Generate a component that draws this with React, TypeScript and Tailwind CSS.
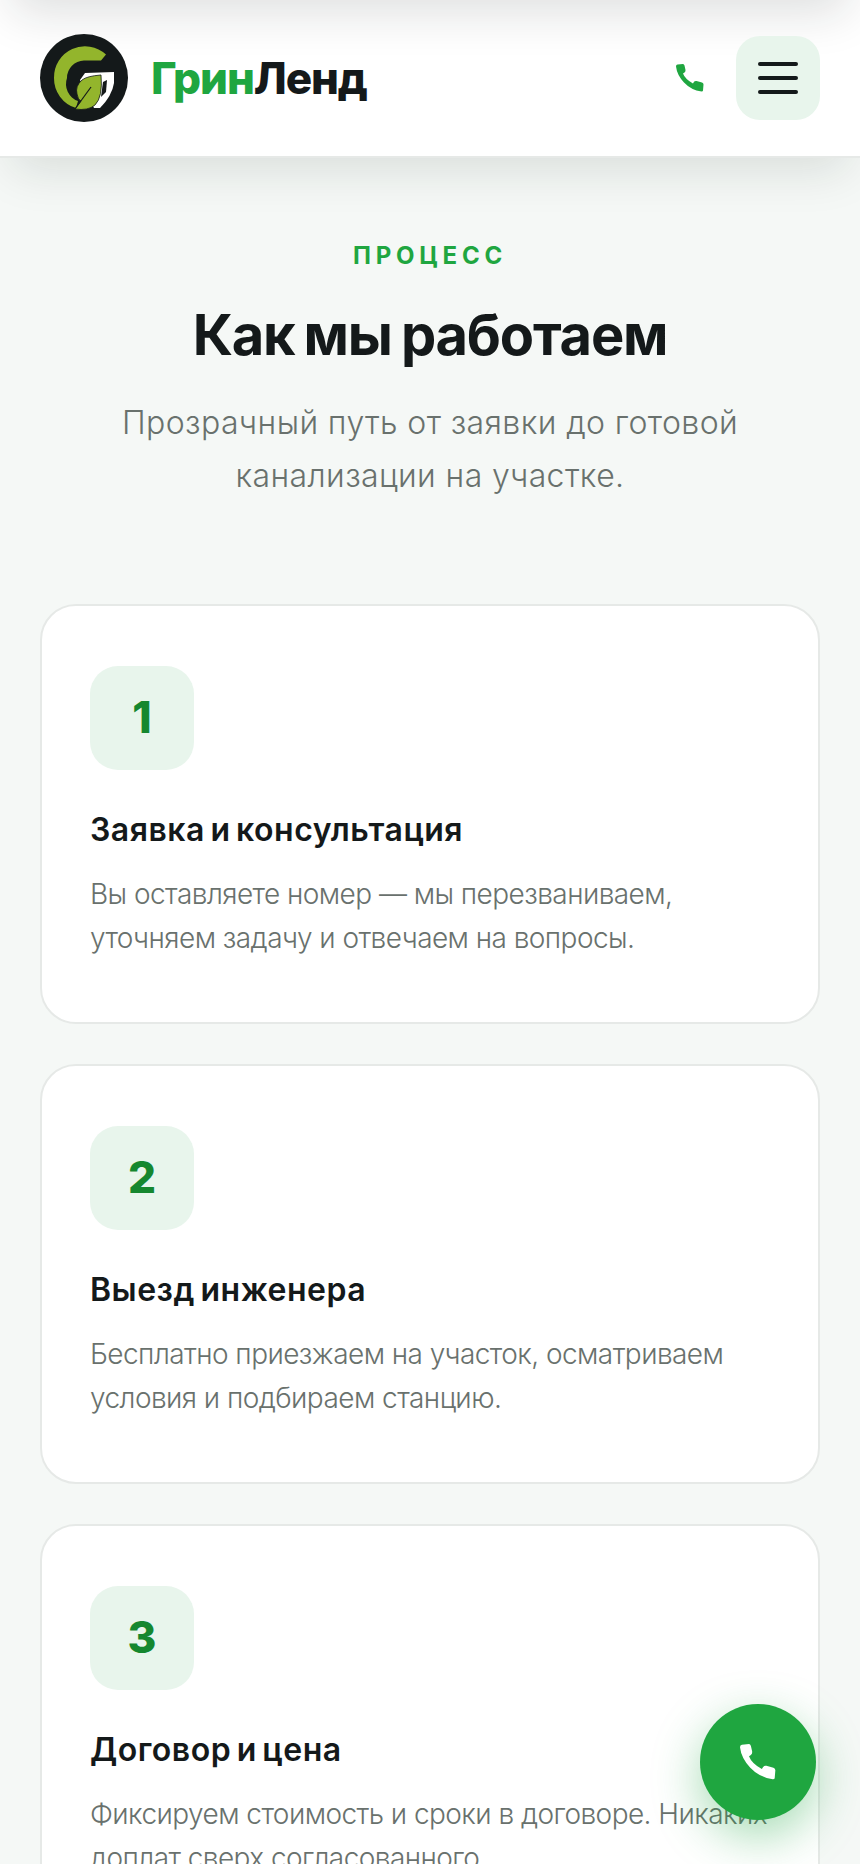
import React from "react";

const steps = [
  {
    n: "1",
    title: "Заявка и консультация",
    text: "Вы оставляете номер — мы перезваниваем, уточняем задачу и отвечаем на вопросы.",
  },
  {
    n: "2",
    title: "Выезд инженера",
    text: "Бесплатно приезжаем на участок, осматриваем условия и подбираем станцию.",
  },
  {
    n: "3",
    title: "Договор и цена",
    text: "Фиксируем стоимость и сроки в договоре. Никаких доплат сверх согласованного.",
  },
];

const PhoneIcon = ({ className }: { className: string }) => (
  <svg className={className} viewBox="0 0 28 28" fill="currentColor">
    <path d="M1.5 .5L7 0Q8 0 8.5 1.5L9.5 6Q9.7 7.5 8.5 8.5L7 9.5Q9 15 17 19.5L18 17.8Q19 16.7 20.5 17L26 18.5Q27.5 19 27.5 20.5L27 26.5Q27 27.5 25.5 27.5Q15 26 8 18.5Q1 11 0 2.5Q0 .7 1.5 .5Z" />
  </svg>
);

const Logo = () => (
  <svg className="w-[88px] h-[88px] shrink-0" viewBox="0 0 88 88">
    <circle cx="44" cy="44" r="44" fill="#14191a" />
    <path d="M66 20.5A31 31 0 0 0 14 44A31 31 0 0 0 36 74L38 67A18 18 0 0 1 27 44A17.5 17.5 0 0 1 44 26.5H61Z" fill="#93b52c" />
    <path d="M40 46L45 39L74 38V49Q72 62 60 74L54 74Z" fill="#fff" />
    <path d="M63 48L67 46L66 58L61 63Z" fill="#14191a" />
    <path d="M61 41Q47 42 42 46Q35 52 37 60Q38 66 41 67L35 75Q48 77 55 71Q63 63 61 41Z" fill="#93b52c" stroke="#14191a" strokeWidth="0.8" />
    <path d="M35 75L51 53" stroke="#14191a" strokeWidth="1.2" fill="none" />
  </svg>
);

export default function App() {
  return (
    <div className="relative h-[1864px] overflow-hidden bg-[#f5f8f6] font-['Inter',sans-serif]">
      <header className="relative z-10 h-[158px] bg-white border-b-2 border-[#e6e9e7] shadow-[0_24px_48px_-12px_rgba(20,30,25,0.12)] flex items-center justify-between pl-10 pr-10">
        <div className="absolute inset-0 overflow-hidden pointer-events-none">
          <div className="h-full -mt-[156px] shadow-[0_24px_48px_-12px_rgba(20,30,25,0.14)]" />
        </div>
        <div className="relative flex items-center gap-[23px]">
          <Logo />
          <div className="text-[44px] leading-none font-extrabold tracking-[-0.025em] text-[#14191a]">
            <span className="text-[#1fa640]">Грин</span>Ленд
          </div>
        </div>
        <div className="relative flex items-center gap-8">
          <PhoneIcon className="w-7 h-7 text-[#1fa640]" />
          <div className="w-[84px] h-[84px] rounded-[24px] bg-[#e8f5ec] flex flex-col items-center justify-center gap-[10px]">
            <span className="block w-10 h-1 rounded-full bg-[#14191a]" />
            <span className="block w-10 h-1 rounded-full bg-[#14191a]" />
            <span className="block w-10 h-1 rounded-full bg-[#14191a]" />
          </div>
        </div>
      </header>

      <main className="px-10 pt-[83px]">
        <div className="text-center">
          <p className="text-[24px] leading-[30px] font-bold tracking-[0.2em] text-[#1fa640]">ПРОЦЕСС</p>
          <h2 className="mt-[30px] text-[56px] leading-[68px] font-bold tracking-[-1.2px] [word-spacing:-3px] text-[#14191a]">Как мы работаем</h2>
          <p className="mt-[27px] mx-auto max-w-[680px] text-[32px] leading-[53px] font-light tracking-[0.4px] text-[#69716d]">
            Прозрачный путь от заявки до готовой канализации на участке.
          </p>
        </div>

        <div className="mt-[102px] flex flex-col gap-[40px]">
          {steps.map((s) => (
            <div key={s.n} className="bg-white border-2 border-[#e6e9e7] rounded-[36px] h-[420px] px-[48px] pt-[60px]">
              <div className="w-[104px] h-[104px] pb-[3px] rounded-[28px] bg-[#e8f5ec] flex items-center justify-center text-[44px] font-extrabold text-[#15872f]">
                {s.n}
              </div>
              <h3 className="mt-[38px] text-[32px] leading-[44px] font-semibold tracking-[0.5px] [word-spacing:-3px] text-[#14191a]">{s.title}</h3>
              <p className="mt-[20px] text-[28px] leading-[44px] font-light tracking-[-0.02em] text-[#69716d]">{s.text}</p>
            </div>
          ))}
        </div>
      </main>

      <div className="fixed left-[700px] top-[1704px] z-20 w-[116px] h-[116px] rounded-full bg-[#1fa640] text-white flex items-center justify-center shadow-[0_16px_48px_rgba(31,166,64,0.4)]">
        <PhoneIcon className="w-9 h-9" />
      </div>
    </div>
  );
}
